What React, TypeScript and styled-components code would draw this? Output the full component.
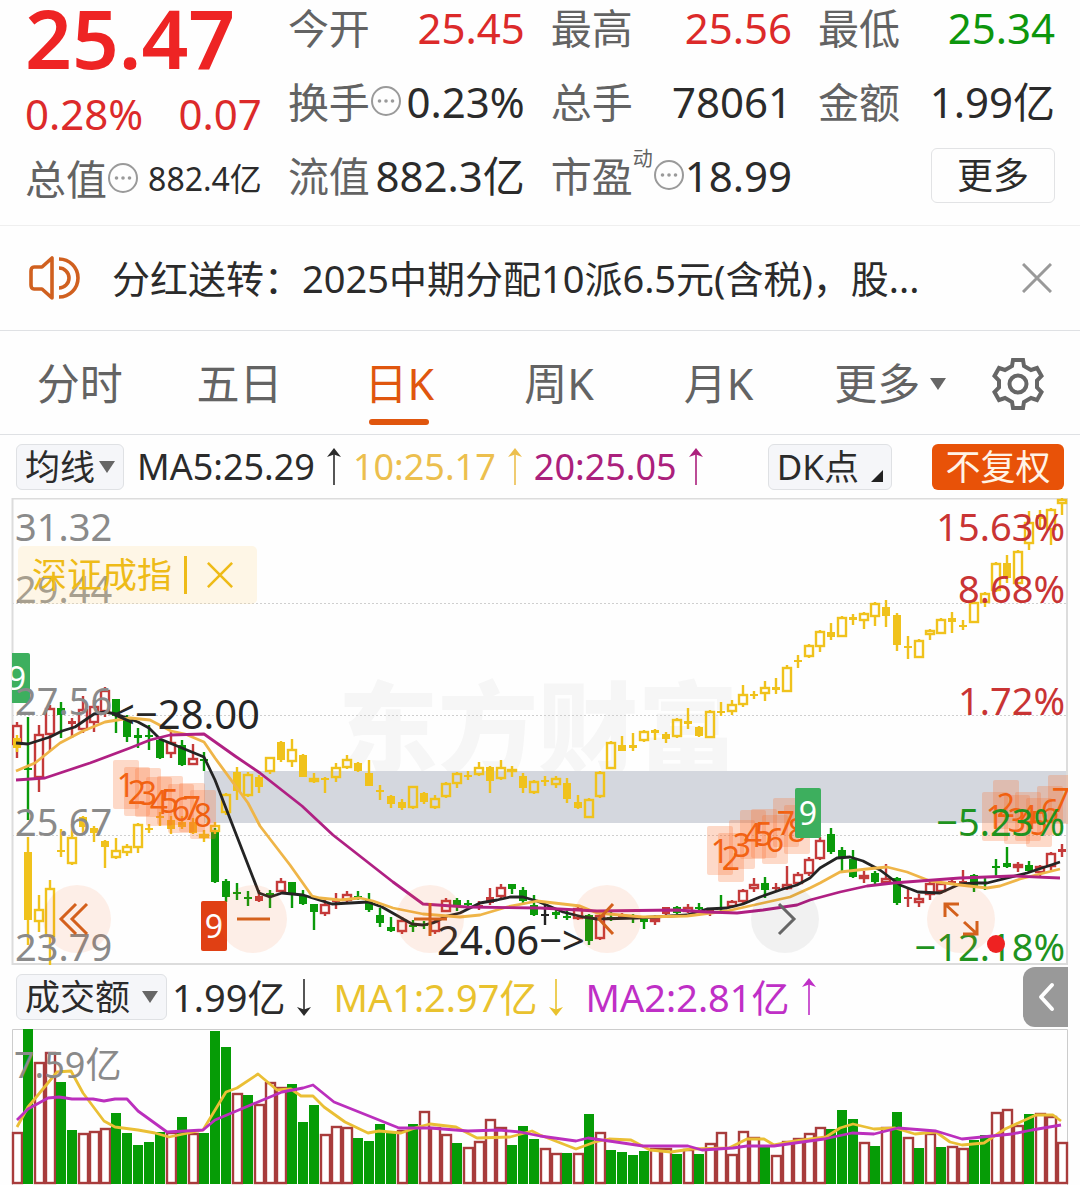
import React from "react";
import styled, { createGlobalStyle } from "styled-components";

const colors = {
  rise: "#dc2a2a",
  fall: "#0d960d",
  ink: "#2b2b2b",
  label: "#636363",
  accent: "#e0560e",
  line: "#dfe1e4",
  gold: "#ecbf4e",
  magenta: "#ab207c",
  violet: "#bf2fc6",
};

const GlobalStyle = createGlobalStyle`
  * { box-sizing: border-box; }
  body { margin: 0; background: #fefefe; }
  body, button { font-family: "Noto Sans", "Noto Sans CJK SC", sans-serif; }
  button { border: 0; padding: 0; background: none; color: inherit; cursor: pointer; }
`;

const Page = styled.main`
  color: ${colors.ink};
  background: #fefefe;
  overflow: hidden;
`;

/* ---------- quote summary ---------- */

const Quote = styled.section`
  display: grid;
  grid-template-columns: repeat(4, 1fr);
  gap: 26px;
  padding: 0 25px 21px;
  border-bottom: 1px solid #efefef;
`;

const PriceColumn = styled.div`
  display: flex;
  flex-direction: column;
`;

const Price = styled.strong`
  font-size: 82px;
  line-height: 74px;
  font-weight: 600;
  color: #ee2424;
`;

const Change = styled.div`
  display: flex;
  justify-content: space-between;
  font-size: 42px;
  line-height: 80px;
  color: ${colors.rise};
`;

const StatColumn = styled.div`
  display: flex;
  flex-direction: column;
  gap: 18px;
`;

const Stat = styled.div<{ $small?: boolean }>`
  display: flex;
  align-items: center;
  justify-content: space-between;
  height: ${(p) => (p.$small ? 50 : 56)}px;
  white-space: nowrap;
`;

const StatLabel = styled.span`
  display: flex;
  align-items: center;
  font-size: 41px;
  line-height: 50px;
  color: ${colors.label};
`;

const StatValue = styled.span<{ $tone?: string; $small?: boolean }>`
  font-size: ${(p) => (p.$small ? 32 : 42)}px;
  line-height: 50px;
  color: ${(p) => p.$tone ?? colors.ink};
`;

const Sup = styled.sup`
  align-self: flex-start;
  font-size: 20px;
  line-height: 16px;
`;

const MoreButton = styled.button`
  align-self: flex-end;
  width: 124px;
  height: 55px;
  border: 1px solid #e2e3e5;
  border-radius: 6px;
  font-size: 36px;
  line-height: 50px;
`;

/* ---------- notice ---------- */

const Notice = styled.section`
  display: flex;
  align-items: center;
  height: 105px;
  padding: 0 28px;
  border-bottom: 1px solid ${colors.line};
`;

const NoticeText = styled.p`
  flex: 1;
  min-width: 0;
  margin: 0 40px 0 32px;
  font-size: 38px;
  line-height: 56px;
  white-space: nowrap;
  overflow: hidden;
`;

const IconButton = styled.button`
  display: grid;
  place-items: center;
`;

/* ---------- period tabs ---------- */

const Tabs = styled.nav`
  display: flex;
  height: 104px;
  padding-right: 26px;
  border-bottom: 1px solid ${colors.line};
`;

const Tab = styled.button<{ $active?: boolean; $grow: number }>`
  flex: ${(p) => p.$grow} 1 0;
  display: flex;
  flex-direction: column;
  align-items: center;
  padding-top: 18px;
  font-size: 43px;
  color: ${(p) => (p.$active ? colors.accent : colors.label)};
`;

const TabLabel = styled.span`
  display: flex;
  align-items: center;
  gap: 10px;
  height: 70px;
  line-height: 72px;
`;

const TabBar = styled.span`
  width: 60px;
  height: 6px;
  border-radius: 3px;
  background: ${colors.accent};
`;

/* ---------- indicator rows ---------- */

const IndicatorRow = styled.div<{ $height: number; $gap: number; $right: number }>`
  display: flex;
  align-items: center;
  gap: ${(p) => p.$gap}px;
  height: ${(p) => p.$height}px;
  padding: 0 ${(p) => p.$right}px 0 16px;
`;

const Pill = styled.button<{ $wide?: boolean }>`
  display: flex;
  align-items: center;
  gap: ${(p) => (p.$wide ? 12 : 4)}px;
  height: 46px;
  padding: 0 8px;
  border: 1px solid ${colors.line};
  border-radius: 6px;
  background: #f5f6f9;
  color: ${colors.ink};
  font-size: 35px;
  line-height: 44px;
  white-space: nowrap;
`;

const Reading = styled.span<{ $tone: string; $large?: boolean }>`
  display: flex;
  align-items: center;
  gap: 12px;
  font-size: ${(p) => (p.$large ? 38 : 36)}px;
  line-height: 50px;
  color: ${(p) => p.$tone};
  white-space: nowrap;
`;

const Readings = styled.div<{ $gap: number }>`
  display: flex;
  gap: ${(p) => p.$gap}px;
`;

const Spacer = styled.span`
  flex: 1;
`;

const PillGroup = styled.div`
  display: flex;
  gap: 40px;
`;

const SolidPill = styled.button`
  height: 46px;
  width: 132px;
  border-radius: 6px;
  background: #e85208;
  color: #fff3e6;
  font-size: 35px;
  line-height: 44px;
`;

const Drawer = styled.button`
  display: grid;
  place-items: center;
  width: 45px;
  height: 60px;
  border-radius: 12px 0 0 12px;
  background: #999;
`;

/* ---------- charts ---------- */

const Plot = styled.section`
  position: relative;
`;

const Canvas = styled.svg`
  display: block;
  width: 100%;
  height: auto;
`;

const OverlayTag = styled.div`
  position: absolute;
  top: 48px;
  left: 18px;
  display: flex;
  align-items: center;
  gap: 12px;
  height: 58px;
  padding: 0 24px 0 14px;
  border-radius: 5px;
  background: rgba(255, 225, 160, 0.25);
  color: #eebb18;
  font-size: 35px;
  line-height: 62px;
`;

const TagRule = styled.span`
  width: 3px;
  height: 38px;
  margin-right: 8px;
  background: #eebb18;
`;

const RoundButton = styled.button<{ $x: number; $muted?: boolean }>`
  position: absolute;
  left: ${(p) => p.$x}%;
  bottom: 12px;
  width: 68px;
  height: 68px;
  margin-left: -34px;
  border-radius: 50%;
  display: grid;
  place-items: center;
  background: ${(p) => (p.$muted ? "rgba(0,0,0,0.05)" : "rgba(250,100,30,0.1)")};
`;

/* ---------- data ---------- */

// [kind, body top, body bottom, high, low]; kind: r/g/k/y + h hollow, f filled
type Candle = [string, number, number, number, number];

const parse = (s: string): Candle[] =>
  s.trim().split(/\s*;\s*/).map((row) => {
    const [k, ...n] = row.split(" ");
    return [k, ...n.map(Number)] as Candle;
  });

const stock = parse(`rh 725 745 722 758;gf 768 770 717 820;rh 734 778 725 792;rh 708 735 705 751;gf 708 715 702 738;
rf 721 724 718 738;rh 709 730 696 733;rh 706 723 700 732;rh 690 712 687 717;gf 699 716 699 733;gf 720 737 715 742;
gf 735 738 728 748;gf 735 737 725 750;gf 740 758 738 759;rh 742 754 732 758;gf 745 765 740 766;rh 758 765 744 765;
gf 759 761 752 771;gf 832 882 828 883;gf 881 897 879 902;gf 892 894 883 900;gf 897 899 891 906;rf 896 901 890 902;
gf 893 895 890 908;rh 881 892 878 892;gf 882 895 882 908;gf 895 904 890 905;gf 904 912 904 930;rh 904 914 900 916;
rf 900 902 893 909;rh 894 901 891 902;gf 896 898 891 900;gf 900 910 893 912;gf 915 923 908 927;gf 927 931 917 932;
rh 920 932 917 934;gf 925 927 920 932;gf 924 926 921 929;rh 921 932 918 934;rh 900 912 898 912;gf 900 907 898 911;
gf 903 905 900 909;rf 905 908 901 910;rf 897 903 888 905;rh 887 897 884 898;gf 884 889 884 894;gf 890 901 887 905;
gf 905 915 895 916;kf 914 916 905 925;gf 912 915 910 919;gf 916 918 910 920;rh 908 919 906 920;gf 915 941 914 945;
rh 915 939 913 940;gf 917 919 912 921;rf 916 918 913 919;gf 917 919 914 923;gf 919 922 918 929;rh 918 922 915 925;
rf 907 914 907 915;gf 907 913 906 914;rh 907 912 904 913;gf 907 909 903 911;rf 909 911 908 916;gf 907 909 895 911;
rh 901 907 900 908;rh 890 902 889 903;rh 884 889 878 892;gf 883 890 877 898;rf 887 889 883 892;rh 884 889 866 890;
rh 874 884 872 885;rh 859 874 857 876;rh 840 859 837 860;gf 834 852 828 854;gf 850 857 847 872;gf 859 877 850 878;
rh 875 879 871 883;gf 873 882 871 884;rh 878 883 864 884;gf 878 903 877 905;rf 897 899 888 907;rh 898 903 894 907;
rh 883 895 882 900;rh 883 892 882 894;rf 881 884 880 885;rf 881 883 870 884;gf 875 886 874 892;gf 882 884 878 890;
gf 866 868 859 876;gf 863 867 847 868;rh 864 868 862 872;gf 865 871 861 872;rh 866 873 865 878;rh 853 867 852 870;
rf 849 852 844 857`);

const index = parse(`yf 738 748 735 752;yf 852 920 837 945;yh 909 922 895 932;yh 888 937 880 965;yf 850 852 829 857;
yh 837 864 824 865;yf 817 827 816 833;yf 828 833 826 842;yf 841 847 840 868;yh 850 858 838 859;yh 846 853 844 856;
yh 824 848 823 853;yf 828 830 824 833;yf 816 818 812 826;yf 820 829 816 834;yf 822 827 816 829;yf 822 833 818 834;
yh 834 838 830 842;yh 825 832 822 834;yh 794 813 793 815;yf 772 791 767 800;yh 774 796 772 797;yf 777 787 775 793;
yh 757 772 757 774;yf 742 760 741 762;yh 749 762 739 767;yf 755 777 754 777;yh 778 782 773 783;yf 778 780 777 793;
yh 767 778 763 782;yh 759 768 755 769;yf 763 771 762 772;yf 773 786 760 786;yf 790 792 785 800;yf 796 804 795 808;
yf 802 808 799 810;yh 786 808 786 809;yf 793 802 792 804;yh 798 808 795 809;yh 783 797 782 798;yh 773 784 772 788;
yf 775 777 771 780;yh 767 775 762 776;yf 767 781 766 793;yh 767 779 760 780;yh 769 772 766 777;yf 776 788 773 793;
yh 781 793 780 794;yf 780 782 776 786;yh 778 785 776 788;yf 783 799 778 803;yf 802 808 795 809;yh 799 818 798 818;
yh 772 797 771 798;yh 742 769 741 769;yf 745 751 736 751;yf 745 748 733 751;yh 731 741 730 742;yf 730 733 729 740;
yf 734 739 732 743;yh 719 737 718 738;yf 721 724 708 729;yf 727 736 726 737;yh 711 738 710 738;yf 711 713 702 716;
yh 704 712 700 715;yh 694 705 685 707;yf 694 696 691 699;yh 687 694 681 701;yf 687 690 678 694;yh 667 692 665 692;
yf 660 662 655 668;yh 645 657 644 658;yh 631 647 630 652;yf 632 637 623 640;yh 617 637 616 637;yf 617 620 614 625;
yh 613 621 612 629;yh 603 617 602 626;yf 607 616 600 627;yf 615 645 613 651;yf 646 648 636 659;yh 640 658 639 658;
yh 630 635 629 640;yh 619 634 618 634;yf 618 622 612 633;yf 625 627 620 630;yh 602 623 601 623;yh 593 603 592 607;
yh 563 591 562 592;yf 563 578 555 583;yh 551 584 550 584;yh 522 544 511 550;yf 515 519 510 530;yh 509 530 508 545;
yh 499 504 498 515`);

const volume =
  `r1132 g1029 r1062 r1052 g1082 g1130 r1133 r1131 r1128 g1113 g1133 g1145 g1142 g1132 r1132 g1117 r1133 g1133 g1031 g1047
r1093 g1095 r1104 r1082 r1087 g1084 g1122 g1105 r1134 r1126 r1127 g1138 g1141 g1124 g1133 r1130 g1124 r1111 r1127 r1134
g1143 r1147 r1141 r1119 r1127 g1145 g1126 g1139 r1148 r1153 g1153 r1153 g1114 r1132 g1150 g1152 g1155 g1151 r1148 r1148
g1154 r1149 g1154 r1143 r1132 r1154 r1131 r1137 g1146 r1155 r1141 r1138 r1133 r1127 g1129 g1110 g1119 r1142 g1146 r1127
g1112 r1137 g1148 r1133 g1147 r1146 r1148 g1140 g1135 r1112 r1109 r1125 g1114 r1113 r1116 r1142`.split(/\s+/);

const lines = {
  ma10: "16,771 35,763 60,743 83,731 105,722 130,718 150,720 171,731 185,734 204,742 215,758 248,803 260,826 290,865 312,896 320,898 340,900 360,898 373,901 393,908 423,914 460,917 480,915 507,907 537,901 580,906 597,913 643,917 687,916 727,911 763,903 790,897 810,888 820,883 840,872 867,869 887,867 907,872 930,881 960,885 987,888 1000,886 1020,879 1060,869",
  ma5: "16,743 28,744 50,737 62,731 75,727 94,714 105,712 116,714 138,722 149,728 160,739 182,748 204,757 215,780 259,893 270,897 282,893 303,895 332,904 368,902 382,907 412,924 423,925 433,923 447,916 460,913 480,903 497,900 510,897 523,897 537,901 563,912 583,917 597,919 637,918 687,915 707,909 727,908 743,904 760,897 783,889 797,885 810,878 820,868 837,858 850,857 863,861 880,870 900,885 918,892 940,893 960,884 977,883 987,883 1027,873 1060,862",
  ma20: "16,780 45,778 90,763 130,748 150,740 170,735 204,734 235,756 260,773 302,806 333,835 393,882 423,904 467,907 540,908 597,911 677,910 707,912 737,913 763,910 797,905 810,900 840,892 867,886 893,883 960,878 1013,876 1060,878",
  vol1: "17,1127 28,1107 57,1072 71,1071 83,1093 104,1121 115,1127 138,1130 155,1133 169,1137 203,1130 226,1092 237,1088 258,1074 277,1090 291,1089 301,1096 313,1096 324,1107 345,1122 368,1133 379,1131 401,1133 418,1127 430,1124 456,1127 477,1138 510,1137 532,1131 540,1135 576,1149 595,1142 609,1139 631,1140 650,1150 671,1152 691,1149 729,1148 747,1139 764,1139 774,1145 795,1141 826,1137 840,1128 853,1124 874,1129 895,1128 915,1134 936,1132 950,1142 962,1145 984,1143 1005,1129 1036,1115 1053,1115 1061,1121",
  vol2: "17,1120 28,1109 48,1098 59,1097 72,1099 93,1099 104,1101 115,1099 127,1099 138,1111 167,1132 203,1130 215,1120 258,1102 282,1092 303,1088 313,1085 334,1102 399,1128 430,1128 468,1131 499,1130 520,1132 540,1136 576,1141 588,1138 616,1142 643,1146 688,1146 702,1150 733,1148 747,1146 774,1146 795,1143 824,1139 852,1133 874,1134 898,1128 936,1131 962,1139 1012,1134 1032,1130 1061,1125",
};

// countdown marks: first centre x, then the baseline of each digit
const marks = [
  { x: 126, ys: [797, 804, 805, 814, 813, 821, 820, 827] },
  { x: 720, ys: [863, 870, 857, 847, 846, 852, 835, 842] },
  { x: 995, ys: [829, 817, 832, 829, 835, 823, 812] },
];

const nines = [
  { x: 17, y: 653, fill: "#3daf5e" },
  { x: 808, y: 788, fill: "#3daf5e" },
  { x: 214, y: 901, fill: "#e04014" },
];

const axis = [
  { y: 541, price: "31.32", pct: "15.63%", tone: "#c93434" },
  { y: 603, price: "29.44", pct: "8.68%", tone: "#c93434" },
  { y: 715, price: "27.56", pct: "1.72%", tone: "#c93434" },
  { y: 836, price: "25.67", pct: "−5.23%", tone: "#1f931f" },
  { y: 961, price: "23.79", pct: "−12.18%", tone: "#1f931f" },
];

const candleTone: Record<string, string> = { r: "#c43a3a", g: "#0a9a0a", k: "#222", y: "#f0c21c" };

function Candles({ data }: { data: Candle[] }) {
  return (
    <>
      {data.map(([kind, top, bottom, high, low], i) => {
        const x = 17 + 11 * i;
        const c = candleTone[kind[0]];
        const hollow = kind[1] === "h";
        return (
          <g key={i} stroke={c} strokeWidth={2.4} fill={hollow ? "none" : c}>
            <path d={`M${x} ${high}V${hollow ? top : bottom}M${x} ${bottom}V${low}`} />
            {hollow ? (
              <rect x={x - 4} y={top + 1} width={8} height={Math.max(bottom - top - 2, 1)} />
            ) : (
              <rect x={x - 4} y={top} width={8} height={bottom - top} stroke="none" />
            )}
          </g>
        );
      })}
    </>
  );
}

const Line = ({ points, color }: { points: string; color: string }) => (
  <polyline points={points} fill="none" stroke={color} strokeWidth={2.8} strokeLinejoin="round" />
);

/* ---------- icons ---------- */

const Dots = () => (
  <svg width="32" height="32" viewBox="0 0 32 32" aria-hidden="true">
    <g transform="translate(0 -2)">
      <circle cx="16" cy="17" r="14" fill="none" stroke="#9a9a9a" strokeWidth="2" />
      <g fill="#9a9a9a"><circle cx="9.5" cy="17" r="1.8" /><circle cx="16" cy="17" r="1.8" /><circle cx="22.5" cy="17" r="1.8" /></g>
    </g>
  </svg>
);

const Caret = ({ size = 16 }: { size?: number }) => (
  <svg width={size} height="14" viewBox="0 0 16 14" aria-hidden="true"><path d="M0 1h16L8 13z" fill="#666" /></svg>
);

const Arrow = ({ down }: { down?: boolean }) => (
  <svg width="14" height="40" viewBox="0 0 14 40" aria-hidden="true">
    <g transform={down ? "rotate(180 7 20)" : undefined}>
      <path d="M7 3V38" stroke="currentColor" strokeWidth="1.6" />
      <path d="M7 1L14 10L7 7.500L0 10Z" fill="currentColor" />
    </g>
  </svg>
);

const Speaker = () => (
  <svg width="52" height="46" viewBox="0 0 52 46" fill="none" stroke="#d0601f" strokeWidth="3.6" aria-hidden="true">
    <path d="M24 3V43L14 34H6Q3 34 3 30V16Q3 12 6 12H14Z" strokeLinejoin="round" />
    <path d="M31 13a10 10 0 0 1 0 20M31 4a19 19 0 0 1 0 38" />
  </svg>
);

const Cross = ({ size, color, weight }: { size: number; color: string; weight: number }) => (
  <svg width={size} height={size} viewBox="0 0 30 30" aria-hidden="true">
    <path d="M1 1L29 29M29 1L1 29" stroke={color} strokeWidth={weight} />
  </svg>
);

const Gear = () => (
  <svg width="52" height="54" viewBox="0 0 52 54" fill="none" stroke="#666" strokeWidth="4" aria-hidden="true">
    <path d="M21 3H31L32 9L39 13L45 11L49.500 19L45 23.500V30.500L49.500 35L45 43L39 41L32 45L31 51H21L20 45L13 41L7 43L2.500 35L7 30.500V23.500L2.500 19L7 11L13 13L20 9Z" />
    <circle cx="26" cy="27" r="8.500" />
  </svg>
);

const controls = [
  { label: "快速左移", x: 7.13, d: "M33 19L18 34L33 49M44 19L29 34L44 49" },
  { label: "缩小", x: 23.43, d: "M18 34H51" },
  { label: "放大", x: 39.86, d: "M18 34H51M34 18V51" },
  { label: "左移", x: 56.2, d: "M40 19L26 34L40 49" },
  { label: "右移", x: 72.69, d: "M28 19L43 34L28 49", muted: true },
  { label: "全屏", x: 89, d: "M18 32V19H32M19 20L31 31M50 36V49H36M49 48L37 37" },
];

export default function App() {
  return (
    <Page>
      <GlobalStyle />
      <Quote>
        <PriceColumn>
          <Price>25.47</Price>
          <Change><span>0.28%</span><span>0.07</span></Change>
          <Stat $small><StatLabel>总值<Dots /></StatLabel><StatValue $small>882.4亿</StatValue></Stat>
        </PriceColumn>
        <StatColumn>
          <Stat><StatLabel>今开</StatLabel><StatValue $tone={colors.rise}>25.45</StatValue></Stat>
          <Stat><StatLabel>换手<Dots /></StatLabel><StatValue>0.23%</StatValue></Stat>
          <Stat><StatLabel>流值</StatLabel><StatValue>882.3亿</StatValue></Stat>
        </StatColumn>
        <StatColumn>
          <Stat><StatLabel>最高</StatLabel><StatValue $tone={colors.rise}>25.56</StatValue></Stat>
          <Stat><StatLabel>总手</StatLabel><StatValue>78061</StatValue></Stat>
          <Stat><StatLabel>市盈<Sup>动</Sup><Dots /></StatLabel><StatValue>18.99</StatValue></Stat>
        </StatColumn>
        <StatColumn>
          <Stat><StatLabel>最低</StatLabel><StatValue $tone={colors.fall}>25.34</StatValue></Stat>
          <Stat><StatLabel>金额</StatLabel><StatValue>1.99亿</StatValue></Stat>
          <MoreButton>更多</MoreButton>
        </StatColumn>
      </Quote>

      <Notice>
        <Speaker />
        <NoticeText>分红送转：2025中期分配10派6.5元(含税)，股...</NoticeText>
        <IconButton aria-label="关闭公告"><Cross size={30} color="#999" weight={3} /></IconButton>
      </Notice>

      <Tabs>
        {["分时", "五日", "日K", "周K", "月K"].map((t) => (
          <Tab key={t} $grow={160} $active={t === "日K"}>
            <TabLabel>{t}</TabLabel>
            {t === "日K" && <TabBar />}
          </Tab>
        ))}
        <Tab $grow={184}><TabLabel>更多<Caret /></TabLabel></Tab>
        <Tab $grow={72} aria-label="设置"><TabLabel><Gear /></TabLabel></Tab>
      </Tabs>

      <IndicatorRow $height={63} $gap={13} $right={16}>
        <Pill>均线<Caret /></Pill>
        <Readings $gap={12}>
          <Reading $tone={colors.ink}>MA5:25.29<Arrow /></Reading>
          <Reading $tone={colors.gold}>10:25.17<Arrow /></Reading>
          <Reading $tone={colors.magenta}>20:25.05<Arrow /></Reading>
        </Readings>
        <Spacer />
        <PillGroup>
          <Pill $wide>
            DK点
            <svg width="12" height="30" viewBox="0 0 12 30" aria-hidden="true"><path d="M12 18V30H0Z" fill="#222" /></svg>
          </Pill>
          <SolidPill>不复权</SolidPill>
        </PillGroup>
      </IndicatorRow>

      <Plot>
        <Canvas viewBox="0 498 1080 467" role="img" aria-label="日K线图">
          <defs>
            <clipPath id="plot-area"><rect x="12" y="498" width="1056" height="467" /></clipPath>
          </defs>
          <text x="338" y="766" fontSize="100" fontWeight="900" fill="#f6f6f6">东方财富</text>
          <rect x="204" y="771" width="863" height="52" fill="#d4d7de" />
          <path d="M12 603.500H1067M12 715.500H1067M12 835.500H1067" stroke="#cfcfcf" strokeWidth="1" strokeDasharray="2 2" />
          <path d="M12.500 965V498.500H1067V965M12 964H1067" fill="none" stroke="#dcdcdc" strokeWidth="2" />
          <g clipPath="url(#plot-area)">
            <Candles data={stock} />
            <Candles data={index} />
            {marks.map((m) =>
              m.ys.map((y, k) => (
                <g key={`${m.x}-${k}`}>
                  <rect x={m.x + 11 * k - 13} y={y - 37} width="26" height="49" rx="2" fill="#fa6a28" fillOpacity="0.25" />
                  <text x={m.x + 11 * k} y={y} fontSize="32" textAnchor="middle" fill="#f0600f">{k + 1}</text>
                </g>
              )),
            )}
            <Line points={lines.ma5} color="#242424" />
            <Line points={lines.ma10} color="#efb548" />
            <Line points={lines.ma20} color="#b02083" />
            {nines.map((n) => (
              <g key={n.x}>
                <rect x={n.x - 13} y={n.y} width="26" height="50" rx="2" fill={n.fill} />
                <text x={n.x} y={n.y + 37} fontSize="32" textAnchor="middle" fill="#fff">9</text>
              </g>
            ))}
          </g>
          <g fontSize="40" fill="#262626">
            <text x="112" y="729">&lt;−28.00</text>
            <text x="437" y="955">24.06−&gt;</text>
          </g>
          <g fontSize="38">
            {axis.map((a) => (
              <React.Fragment key={a.price}>
                <text x="15" y={a.y} fill="#8a8a8a">{a.price}</text>
                <text x="1065" y={a.y} textAnchor="end" fill={a.tone}>{a.pct}</text>
              </React.Fragment>
            ))}
          </g>
          <circle cx="996" cy="944" r="9" fill="#ee2222" />
        </Canvas>
        <OverlayTag>
          深证成指
          <TagRule />
          <IconButton aria-label="移除叠加"><Cross size={26} color="#eebb18" weight={3} /></IconButton>
        </OverlayTag>
        {controls.map((c) => (
          <RoundButton key={c.label} aria-label={c.label} $x={c.x} $muted={c.muted}>
            <svg width="68" height="68" viewBox="0 0 68 68" fill="none" stroke={c.muted ? "#666" : "#d4601c"} strokeWidth="3" aria-hidden="true">
              <path d={c.d} />
            </svg>
          </RoundButton>
        ))}
      </Plot>

      <IndicatorRow $height={64} $gap={5} $right={12}>
        <Pill $wide>成交额<Caret /></Pill>
        <Readings $gap={22}>
          <Reading $large $tone={colors.ink}>1.99亿<Arrow down /></Reading>
          <Reading $large $tone="#e9c22e">MA1:2.97亿<Arrow down /></Reading>
          <Reading $large $tone={colors.violet}>MA2:2.81亿<Arrow /></Reading>
        </Readings>
        <Spacer />
        <Drawer aria-label="展开侧栏">
          <svg width="18" height="30" viewBox="0 0 18 30" aria-hidden="true">
            <path d="M15 3L4 15L15 27" fill="none" stroke="#fff" strokeWidth="4" strokeLinecap="round" strokeLinejoin="round" />
          </svg>
        </Drawer>
      </IndicatorRow>

      <Canvas viewBox="0 1029 1080 156" role="img" aria-label="成交额">
        <path d="M12.500 1185V1029.500H1067.500V1185" fill="none" stroke="#ccc" />
        {volume.map((v, i) => {
          const top = Number(v.slice(1));
          const x = 12 + 11 * i;
          return v[0] === "g" ? (
            <rect key={i} x={x} y={top} width="10" height={1184 - top} fill="#069c06" />
          ) : (
            <rect key={i} x={x + 1} y={top + 1} width="9" height={1182 - top} fill="#fff" stroke="#a83c3c" strokeWidth="2.400" />
          );
        })}
        <Line points={lines.vol1} color="#eabf35" />
        <Line points={lines.vol2} color="#bb2fbd" />
        <text x="14" y="1078" fontSize="36" fill="#8a8a8a">7.59亿</text>
      </Canvas>
    </Page>
  );
}
